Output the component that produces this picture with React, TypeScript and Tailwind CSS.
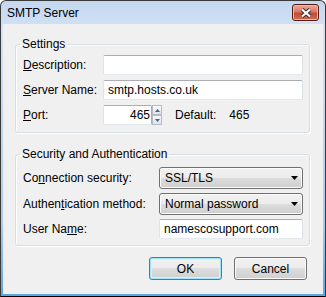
import React from "react";

const btnBg =
  "bg-[linear-gradient(to_bottom,#f2f2f2_0%,#ebebeb_50%,#dddddd_50%,#cfcfcf_100%)]";

function TextBox({ value, className }: { value?: string; className: string }) {
  return (
    <div
      className={`flex h-[20px] items-center rounded-[2px] border border-[#abadb3] border-b-[#e3e9ef] border-l-[#e2e3ea] border-r-[#dbdfe6] bg-white pl-[4px] ${className}`}
    >
      {value}
    </div>
  );
}

function Select({ value }: { value: string }) {
  return (
    <div
      className={`flex h-[22px] w-[144px] items-center justify-between rounded-[3px] border border-[#707070] pl-[5px] pr-[4px] shadow-[inset_0_0_0_1px_#fcfcfc] ${btnBg}`}
    >
      <span>{value}</span>
      <svg width="7" height="4" viewBox="0 0 7 4">
        <path d="M0 0H7L3.5 4Z" fill="#000" />
      </svg>
    </div>
  );
}

function Spinner() {
  return (
    <div className="flex h-[20px] w-[10px] flex-col">
      {[0, 1].map((i) => (
        <div
          key={i}
          className="flex h-[10px] items-center justify-center border border-[#b5bcc7] bg-[linear-gradient(to_bottom,#f7f9fb,#dde3ea)]"
        >
          <svg width="5" height="3" viewBox="0 0 5 3">
            <path d={i === 0 ? "M0 3H5L2.5 0Z" : "M0 0H5L2.5 3Z"} fill="#4d6185" />
          </svg>
        </div>
      ))}
    </div>
  );
}

export default function App() {
  return (
    <div className="h-[297px] w-[326px] font-['Liberation_Sans',Arial,sans-serif] text-[12px] text-black">
      <div className="flex h-full flex-col rounded-t-[6px] border border-[#3a3a3a] border-b-black bg-[linear-gradient(to_bottom,#c3d7ef,#d4e3f5_10%,#a9cbec_75%,#5aa7df)]">
        <div className="flex h-[23px] items-center justify-between pl-[6px] pr-[6px]">
          <span>SMTP Server</span>
          <div className="flex h-[17px] w-[27px] items-center justify-center rounded-[3px] border border-[#5b1a12] bg-[linear-gradient(to_bottom,#e9ab9c,#d47a66_45%,#c24a33_55%,#cf6e55)] shadow-[inset_0_0_0_1px_#eab8ad]">
            <svg width="12" height="10" viewBox="0 0 12 10">
              <path d="M2 1.5L10 8.5M10 1.5L2 8.5" stroke="#3b2a2a" strokeWidth="4" />
              <path d="M2 1.5L10 8.5M10 1.5L2 8.5" stroke="#ffffff" strokeWidth="2.2" />
            </svg>
          </div>
        </div>

        <div className="mx-[2px] mb-[2px] flex-1 bg-[#f0f0f0] pl-[12px] pt-[13px]">
          <fieldset className="w-[295px] rounded-[3px] border border-[#d5dfe5] pb-[7px] pl-[7px] pr-[5px] pt-[3px] shadow-[1px_1px_0_#fff,inset_1px_1px_0_#fff]">
            <legend className="-ml-[3px] px-[2px] leading-[15px]">Settings</legend>
            <div className="flex flex-col gap-[5px]">
              <div className="flex items-center">
                <span className="w-[80px]">
                  <u>D</u>escription:
                </span>
                <TextBox className="w-[200px]" />
              </div>
              <div className="flex items-center">
                <span className="w-[80px]">
                  <u>S</u>erver Name:
                </span>
                <TextBox className="w-[200px]" value="smtp.hosts.co.uk" />
              </div>
              <div className="flex items-center">
                <span className="w-[80px]">
                  <u>P</u>ort:
                </span>
                <div className="flex h-[20px] w-[49px] items-center justify-end rounded-[2px] border border-[#abadb3] border-b-[#e3e9ef] border-l-[#e2e3ea] bg-white pr-[1px]">
                  465
                </div>
                <Spinner />
                <span className="ml-[13px]">Default:</span>
                <span className="ml-[13px]">465</span>
              </div>
            </div>
          </fieldset>

          <fieldset className="mt-[14px] w-[295px] rounded-[3px] border border-[#d5dfe5] pb-[6px] pl-[7px] pr-[5px] pt-[5px] shadow-[1px_1px_0_#fff,inset_1px_1px_0_#fff]">
            <legend className="-ml-[3px] px-[2px] leading-[15px]">
              Security and Authentication
            </legend>
            <div className="flex flex-col gap-[4px]">
              <div className="flex items-center">
                <span className="w-[136px]">
                  Co<u>n</u>nection security:
                </span>
                <Select value="SSL/TLS" />
              </div>
              <div className="flex items-center">
                <span className="w-[136px]">
                  Authen<u>t</u>ication method:
                </span>
                <Select value="Normal password" />
              </div>
              <div className="flex items-center">
                <span className="w-[136px]">
                  User Na<u>m</u>e:
                </span>
                <TextBox className="w-[144px]" value="namescosupport.com" />
              </div>
            </div>
          </fieldset>

          <div className="mt-[11px] flex gap-[12px] pl-[134px]">
            <div
              className={`flex h-[23px] w-[73px] items-center justify-center rounded-[3px] border border-[#3c7fb1] shadow-[inset_0_0_0_1px_#9fe3f8,inset_0_0_0_2px_#d8f2fb] ${btnBg}`}
            >
              OK
            </div>
            <div
              className={`flex h-[23px] w-[73px] items-center justify-center rounded-[3px] border border-[#707070] shadow-[inset_0_0_0_1px_#fcfcfc] ${btnBg}`}
            >
              Cancel
            </div>
          </div>
        </div>
      </div>
    </div>
  );
}
